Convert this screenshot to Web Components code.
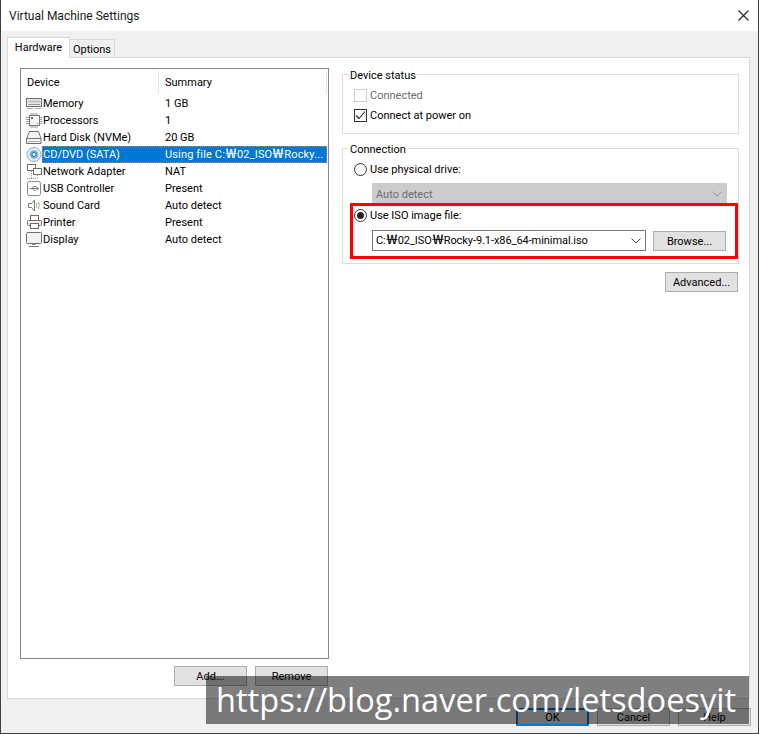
<!DOCTYPE html>
<html><head><meta charset="utf-8">
<style>
html,body{margin:0;padding:0;background:#fff;width:759px;height:734px;overflow:hidden}
body{font:11px Roboto,"Noto Sans CJK KR",sans-serif;color:#000}
</style></head><body>
<vm-dialog>
  <vm-tabs slot="tabs"></vm-tabs>
  <device-list slot="left"></device-list>
  <device-panel slot="right"></device-panel>
</vm-dialog>
<script>
const ui='Roboto,"Noto Sans CJK KR",sans-serif';
const fs='11px';
const won='<span style="font-family:\'Noto Sans CJK KR\',sans-serif;font-size:13px;line-height:0;display:inline-block;width:12px;text-align:center;letter-spacing:0;transform:scaleX(1.45)">₩</span>';
class VmDialog extends HTMLElement{constructor(){super();this.attachShadow({mode:'open'}).innerHTML=`<style>
:host{display:flex;flex-direction:column;width:759px;height:734px;box-sizing:border-box;position:relative;background:#f0f0f0;font:${fs} ${ui};border-left:1px solid #3c4248;border-right:1px solid #3c4248;border-bottom:1px solid #3c4248;overflow:hidden}
.title{height:31px;background:#fff;display:flex;align-items:center;justify-content:space-between;padding:0 9px 0 8px;font-size:12px;color:#1a1a1a;flex:none;box-sizing:border-box}
.tabs{height:26px;flex:none;padding-left:6px;box-sizing:border-box}
.body{flex:none;height:642px;width:743px;margin-left:6px;background:#fff;display:flex;box-sizing:border-box;padding:10px 0 0 12px;gap:13px;border:1px solid #d9d9d9}
.left{width:309px;flex:none;display:flex;flex-direction:column}
.right{flex:none;width:397px}
.foot{flex:1;display:flex;justify-content:flex-end;gap:8px;padding:9px 7px 0 0}
.btns{display:flex;justify-content:flex-end;gap:8px;margin-top:7px;padding-right:1px}
.mark{position:absolute;left:205px;top:676px;width:543px;height:48px;background:rgba(0,0,0,.5);color:#fff;font:400 32.6px/47px "Open Sans",sans-serif;padding-left:10px;box-sizing:border-box;white-space:nowrap}
vm-button.f{height:18px}
</style>
<div class="title"><span>Virtual Machine Settings</span><svg width="11" height="11" viewBox="0 0 11 11"><path d="M.5 .5L10.500 10.500M10.500 .5L.5 10.500" stroke="#222" stroke-width="1.100"/></svg></div>
<div class="tabs"><slot name="tabs"></slot></div>
<div class="body"><div class="left"><slot name="left"></slot>
<div class="btns"><vm-button w="73">Add...</vm-button><vm-button w="73">Remove</vm-button></div></div>
<div class="right"><slot name="right"></slot></div></div>
<div class="foot"><vm-button class="f" w="73" primary>OK</vm-button><vm-button class="f" w="73">Cancel</vm-button><vm-button class="f" w="73">Help</vm-button></div>
<div class="mark">https://blog.naver.com/letsdoesyit</div>`}}
class VmButton extends HTMLElement{constructor(){super();this.attachShadow({mode:'open'}).innerHTML=`<style>
:host{display:inline-flex;align-items:center;justify-content:center;box-sizing:border-box;height:20px;flex:none;background:#e1e1e1;border:1px solid #adadad;font:${fs} ${ui};color:#000;letter-spacing:0}
:host([primary]){border:2px solid #0078d7}
</style><slot></slot>`}connectedCallback(){this.style.width=(this.getAttribute('w')||73)+'px'}}
class VmTabs extends HTMLElement{constructor(){super();this.attachShadow({mode:'open'}).innerHTML=`<style>
:host{display:flex;height:26px;align-items:flex-start;font:${fs} ${ui}}
.t{box-sizing:border-box;border:1px solid #d9d9d9;border-bottom:0;display:flex;align-items:center;justify-content:center}
.a{width:63px;height:21px;margin-top:6px;background:#fff;position:relative;z-index:2;padding-bottom:2px}
.b{width:46px;height:18px;margin-top:8px;background:#f0f0f0;margin-left:-1px;padding-top:1px}
</style><div class="t a">Hardware</div><div class="t b">Options</div>`}}
const icons={
mem:`<rect x=".5" y="2.500" width="15" height="8" fill="#e9e9e9" stroke="#6e6e6e"/><path d="M2 4.500h12v2H2z" fill="#b0b0b0"/><path d="M3 4v3M6 4v3M9 4v3M12 4v3" stroke="#eee" stroke-width=".7"/><path d="M2 8.500h12" stroke="#999"/><path d="M1 12.500h6M9 12.500h6" stroke="#aaa"/>`,
cpu:`<rect x="3.500" y="2.500" width="10" height="10" fill="#f7f7f7" stroke="#777"/><path d="M5 0v2M7 0v2M9 0v2M11 0v2M5 13v2M7 13v2M9 13v2M11 13v2M0 4.500h3M0 6.500h3M0 8.500h3M0 10.500h3M14 4.500h2M14 6.500h2M14 8.500h2M14 10.500h2" stroke="#999"/><path d="M5 4h2v2H5z" fill="#666"/><path d="M11 10h1v1h-1z" fill="#666"/>`,
hdd:`<path d="M3.500 1.500h9l2.500 7v5H.5v-5z" fill="#f7f7f7" stroke="#6e6e6e"/><path d="M1 8.500h14" stroke="#6e6e6e"/><path d="M2 11.500h12" stroke="#aaa"/>`,
cd:`<circle cx="8" cy="7.500" r="7" fill="#e2eff8" stroke="#8eaabd"/><circle cx="8" cy="7.500" r="4.200" fill="#78aedb"/><circle cx="8" cy="7.500" r="2" fill="#fff" stroke="#2a6ca6"/>`,
net:`<rect x="1.500" y=".5" width="8" height="6" fill="#fff" stroke="#6e6e6e"/><rect x="7.500" y="4.500" width="8" height="6" fill="#fff" stroke="#6e6e6e"/><path d="M5.500 7v7M1 14.500h10M11.500 11v3" stroke="#999" stroke-dasharray="1 1"/>`,
usb:`<rect x="1.500" y=".5" width="13" height="14" rx="2" fill="#fff" stroke="#8a8a8a"/><path d="M3.500 7.500h9M10.500 6l2 1.500-2 1.500M6 7.500l1.500-2H10M6.500 7.500l1.500 2h1.500" fill="none" stroke="#7a7a7a"/>`,
snd:`<path d="M2.500 5.500h3l3-3.500v11l-3-3.500h-3z" fill="#fff" stroke="#777"/><path d="M10.500 5q1 2.500 0 5M12.500 4q1.500 3.500 0 7" fill="none" stroke="#aaa" stroke-width="1.200"/>`,
prn:`<rect x="4.500" y=".5" width="8" height="5" fill="#fff" stroke="#6e6e6e"/><rect x="1.500" y="5.500" width="14" height="5" rx="1" fill="#f2f2f2" stroke="#6e6e6e"/><rect x="4.500" y="8.500" width="8" height="5" fill="#fff" stroke="#6e6e6e"/>`,
dis:`<rect x=".5" y=".5" width="15" height="11" rx="1" fill="#f3f3f3" stroke="#6e6e6e"/><path d="M6 12.500h4" stroke="#888"/><path d="M3 14.500h10" stroke="#777"/>`};
const rows=[['mem','Memory','1 GB'],['cpu','Processors','1'],['hdd','Hard Disk (NVMe)','20 GB'],['cd','CD/DVD (SATA)',`Using file C:${won}02_ISO${won}Rocky...`,1],['net','Network Adapter','NAT'],['usb','USB Controller','Present'],['snd','Sound Card','Auto detect'],['prn','Printer','Present'],['dis','Display','Auto detect']];
class DeviceRow extends HTMLElement{constructor(){super();this.attachShadow({mode:'open'})}
connectedCallback(){const r=rows[+this.getAttribute('i')];this.shadowRoot.innerHTML=`<style>
:host{display:flex;height:17px;align-items:center;white-space:nowrap;font:${fs} ${ui}}
svg{width:16px;height:15px;flex:none;margin:0 0 0 5px}
.c{display:flex;flex:1;height:17px;line-height:18px;margin-right:1px;box-sizing:border-box}
.n{width:117px;flex:none;padding-left:1px;box-sizing:border-box}
.s{flex:1;padding-left:6px}
:host([sel]) .c{background:#0078d7;color:#fff;outline:1px dotted #c9883a;outline-offset:-1px}
:host([sel]) .s{letter-spacing:.15px}
</style><svg viewBox="0 0 16 15">${icons[r[0]]}</svg><div class="c"><div class="n">${r[1]}</div><div class="s">${r[2]}</div></div>`}}
class DeviceList extends HTMLElement{constructor(){super();this.attachShadow({mode:'open'}).innerHTML=`<style>
:host{display:block;box-sizing:border-box;height:591px;width:309px;border:1px solid #828790;background:#fff;font:${fs} ${ui}}
.h{display:flex;height:26px;align-items:center;box-sizing:border-box}
.h div{height:24px;line-height:26px;border-right:1px solid #e5e5e5;padding-left:6px;box-sizing:border-box}
</style><div class="h"><div style="width:138px">Device</div><div style="width:168px">Summary</div></div>
${rows.map((r,i)=>`<device-row i="${i}" ${r[3]?'sel':''}></device-row>`).join('')}`}}
class VmGroup extends HTMLElement{constructor(){super();this.attachShadow({mode:'open'}).innerHTML=`<style>
:host{display:block;position:relative;box-sizing:border-box;border:1px solid #dcdcdc;font:${fs} ${ui}}
.l{position:absolute;left:6px;top:-6px;background:#fff;padding:0 1px;line-height:14px}
</style><div class="l">${this.getAttribute('label')}</div><slot></slot>`}}
class VmCheck extends HTMLElement{constructor(){super();this.attachShadow({mode:'open'});}
connectedCallback(){const dis=this.hasAttribute('disabled'),ch=this.hasAttribute('checked');this.shadowRoot.innerHTML=`<style>
:host{display:flex;align-items:center;height:20px;font:${fs} ${ui};color:${dis?'#6d6d6d':'#000'}}
.b{width:13px;height:13px;box-sizing:border-box;border:1px solid ${dis?'#ccc':'#333'};margin-right:3px;display:flex;background:#fff}
</style><div class="b">${ch?'<svg width="11" height="11" viewBox="0 0 11 11"><path d="M1 5.500l3 3 6-7" fill="none" stroke="#222" stroke-width="1.100"/></svg>':''}</div><slot></slot>`}}
class VmRadio extends HTMLElement{constructor(){super();this.attachShadow({mode:'open'});}
connectedCallback(){const ch=this.hasAttribute('checked');this.shadowRoot.innerHTML=`<style>
:host{display:flex;align-items:center;height:20px;font:${fs} ${ui}}
svg{margin-right:3px;flex:none}
</style><svg width="13" height="13" viewBox="0 0 13 13"><circle cx="6.500" cy="6.500" r="6" fill="#fff" stroke="#333"/>${ch?'<circle cx="6.500" cy="6.500" r="3.500" fill="#222"/>':''}</svg><slot></slot>`}}
class VmCombo extends HTMLElement{constructor(){super();this.attachShadow({mode:'open'});}
connectedCallback(){const dis=this.hasAttribute('disabled');this.shadowRoot.innerHTML=`<style>
:host{display:flex;align-items:center;box-sizing:border-box;height:21px;padding:${dis?'1px':'0'} 4px 0 3px;border:1px solid ${dis?'#ccc':'#7a7a7a'};background:${dis?'#ccc':'#fff'};color:${dis?'#6d6d6d':'#000'};font:${fs} ${ui};justify-content:space-between}
</style><span><slot></slot></span><svg width="10" height="6" viewBox="0 0 10 6"><path d="M.5 .5l4.500 4.500 4.500-4.500" fill="none" stroke="${dis?'#999':'#444'}"/></svg>`}}
class DevicePanel extends HTMLElement{constructor(){super();this.attachShadow({mode:'open'}).innerHTML=`<style>
:host{display:flex;flex-direction:column;padding-top:6px;width:397px;font:${fs} ${ui}}
.g1{height:60px;padding:10px 11px 0}
.g2{height:116px;padding:10px 11px 0;margin-top:14px}
.ind{margin-left:18px}
.row{display:flex;gap:7px;margin-left:18px;margin-top:5px;align-items:flex-end}
.red{position:absolute;left:7px;top:54px;width:388px;height:56px;box-sizing:border-box;border:3px solid #f00;pointer-events:none}
.adv{display:flex;justify-content:flex-end;margin-top:8px;padding-right:1px}
</style>
<vm-group class="g1" label="Device status"><vm-check disabled>Connected</vm-check><vm-check checked>Connect at power on</vm-check></vm-group>
<vm-group class="g2" label="Connection"><vm-radio>Use physical drive:</vm-radio>
<vm-combo disabled class="ind" style="margin-top:4px">Auto detect</vm-combo>
<vm-radio checked style="margin-top:1px">Use ISO image file:</vm-radio>
<div class="row"><vm-combo style="width:274px;letter-spacing:-.07px">C:${won}02_ISO${won}Rocky-9.1-x86_64-minimal.iso</vm-combo><vm-button w="73">Browse...</vm-button></div>
<div class="red"></div></vm-group>
<div class="adv"><vm-button w="73">Advanced...</vm-button></div>`}}
customElements.define('vm-button',VmButton);customElements.define('vm-tabs',VmTabs);customElements.define('device-row',DeviceRow);customElements.define('device-list',DeviceList);customElements.define('vm-group',VmGroup);customElements.define('vm-check',VmCheck);customElements.define('vm-radio',VmRadio);customElements.define('vm-combo',VmCombo);customElements.define('device-panel',DevicePanel);customElements.define('vm-dialog',VmDialog);
</script></body></html>
